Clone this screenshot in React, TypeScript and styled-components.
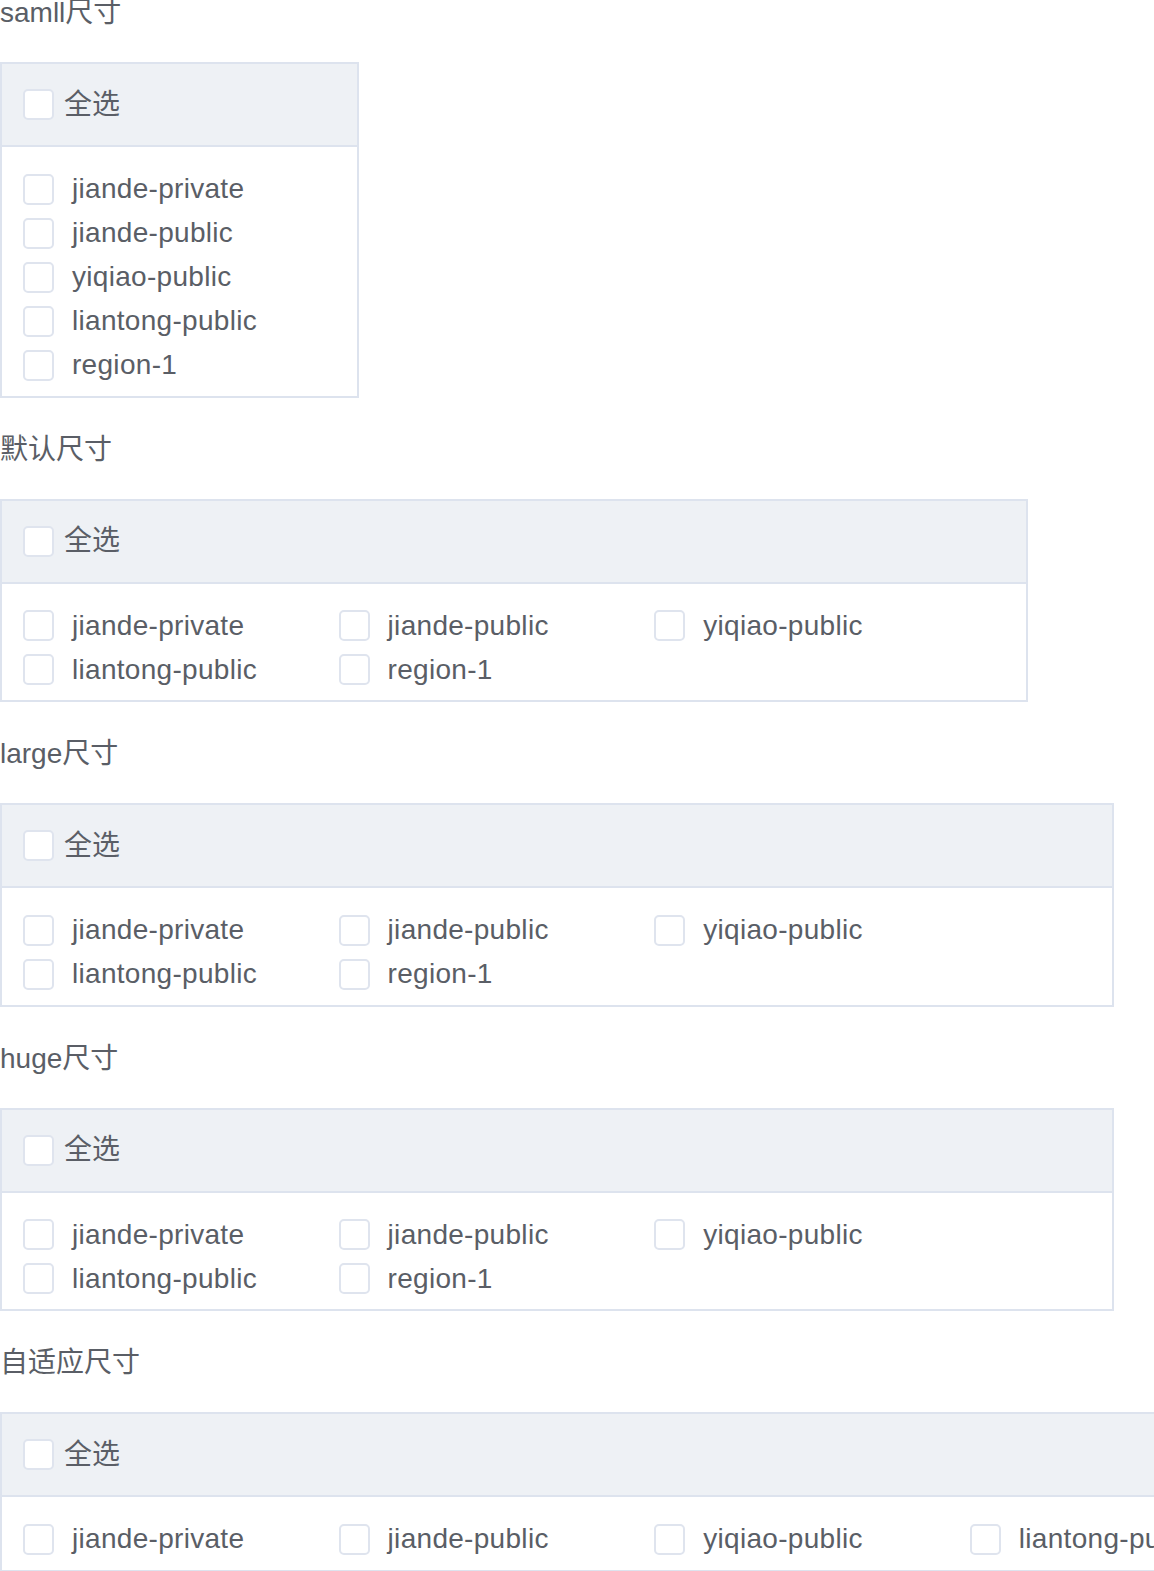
import React from "react";
import styled, { createGlobalStyle } from "styled-components";

const GlobalStyle = createGlobalStyle`
  html, body {
    margin: 0;
    padding: 0;
    overflow-x: hidden;
    background: #ffffff;
  }
  body {
    font-family: "Liberation Sans", Arial, "Noto Sans CJK SC", sans-serif;
    color: #5a5e66;
  }
`;

const Page = styled.div`
  display: flex;
  flex-direction: column;
  gap: 39px;
  padding-bottom: 2px;
`;

const Section = styled.section`
  display: flex;
  flex-direction: column;
`;

const Title = styled.div`
  font-size: 28px;
  line-height: 26px;
  color: #5a5e66;
  margin-bottom: 36px;
  white-space: nowrap;
`;

const Group = styled.div<{ $width: number }>`
  width: ${(p) => p.$width}px;
  flex: none;
  box-sizing: border-box;
  border: 2px solid #dde3ee;
  background: #ffffff;
`;

const Header = styled.div`
  height: 81px;
  box-sizing: content-box;
  background: #eef1f5;
  border-bottom: 2px solid #dde3ee;
  display: flex;
  align-items: center;
  padding-left: 21px;
`;

const Body = styled.div<{ $vertical: boolean }>`
  display: flex;
  flex-direction: ${(p) => (p.$vertical ? "column" : "row")};
  flex-wrap: wrap;
  padding: 20px 21px 8.5px;
`;

const Item = styled.label<{ $vertical: boolean }>`
  display: flex;
  align-items: center;
  height: 44px;
  width: ${(p) => (p.$vertical ? "auto" : "315.6px")};
  flex: none;
  cursor: pointer;
`;

const Box = styled.span`
  width: 31px;
  height: 31px;
  box-sizing: border-box;
  border: 2px solid #dfe4ee;
  border-radius: 5px;
  background: #ffffff;
  flex: none;
`;

const HeaderLabel = styled.span`
  margin-left: 10px;
  font-size: 28px;
  line-height: 40px;
  color: #5a5e66;
  white-space: nowrap;
`;

const ItemLabel = styled.span`
  margin-left: 18px;
  font-size: 28px;
  line-height: 40px;
  letter-spacing: 0.3px;
  color: #5a5e66;
  white-space: nowrap;
`;

const options = [
  "jiande-private",
  "jiande-public",
  "yiqiao-public",
  "liantong-public",
  "region-1",
];

type GroupProps = { title: string; width: number; vertical?: boolean };

function CheckGroup({ title, width, vertical = false }: GroupProps) {
  return (
    <Section>
      <Title>{title}</Title>
      <Group $width={width}>
        <Header>
          <Box />
          <HeaderLabel>全选</HeaderLabel>
        </Header>
        <Body $vertical={vertical}>
          {options.map((o) => (
            <Item key={o} $vertical={vertical}>
              <Box />
              <ItemLabel>{o}</ItemLabel>
            </Item>
          ))}
        </Body>
      </Group>
    </Section>
  );
}

export default function App() {
  return (
    <>
      <GlobalStyle />
      <Page>
        <CheckGroup title="samll尺寸" width={359} vertical />
        <CheckGroup title="默认尺寸" width={1028} />
        <CheckGroup title="large尺寸" width={1114} />
        <CheckGroup title="huge尺寸" width={1114} />
        <CheckGroup title="自适应尺寸" width={1640} />
      </Page>
    </>
  );
}
